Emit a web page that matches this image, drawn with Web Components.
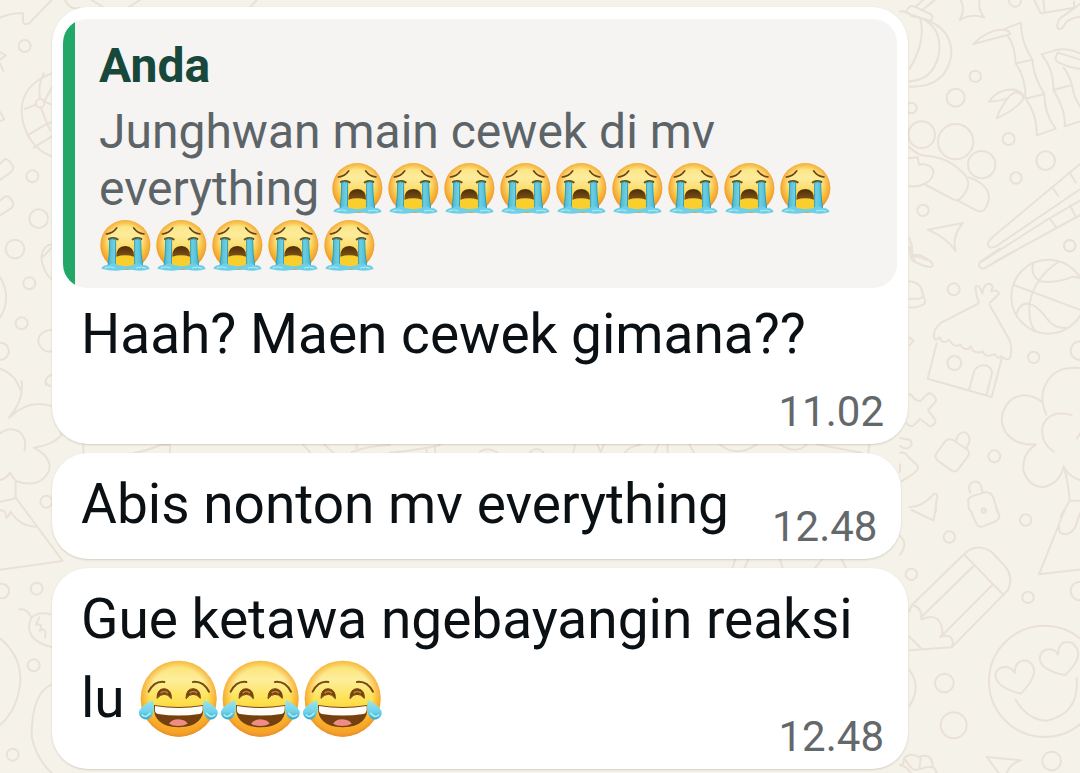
<!DOCTYPE html>
<html lang="id">
<head>
<meta charset="utf-8">
<meta name="viewport" content="width=device-width, initial-scale=1">
<title>Chat</title>
<style>
body { margin: 0; background: #f5f2ea; font-family: Roboto, "Noto Sans", sans-serif; }
</style>
</head>
<body>
<chat-page>
  <chat-bubble time="11.02" layout="below">
    <chat-quote slot="quote" author="Anda">Junghwan main cewek di mv everything <emoji-sob></emoji-sob><emoji-sob></emoji-sob><emoji-sob></emoji-sob><emoji-sob></emoji-sob><emoji-sob></emoji-sob><emoji-sob></emoji-sob><emoji-sob></emoji-sob><emoji-sob></emoji-sob><emoji-sob></emoji-sob><emoji-sob></emoji-sob><emoji-sob></emoji-sob><emoji-sob></emoji-sob><emoji-sob></emoji-sob><emoji-sob></emoji-sob></chat-quote>
    Haah? Maen cewek gimana??
  </chat-bubble>
  <chat-bubble time="12.48" layout="inline">Abis nonton mv everything</chat-bubble>
  <chat-bubble time="12.48" layout="overlap">Gue ketawa ngebayangin reaksi lu <emoji-joy></emoji-joy><emoji-joy></emoji-joy><emoji-joy></emoji-joy></chat-bubble>
</chat-page>

<template id="page-t">
<style>
:host { display: block; position: relative; min-height: 100vh; overflow: hidden; box-sizing: border-box; }
chat-wallpaper { position: absolute; inset: 0; }
main { position: relative; display: flex; flex-direction: column; align-items: flex-start; gap: 9px; padding: 7px 52px 4px; }
</style>
<chat-wallpaper></chat-wallpaper>
<main><slot></slot></main>
</template>

<template id="bubble-t">
<style>
:host { display: block; box-sizing: border-box; max-width: min(856px, 100%); background: #fff; border-radius: 36px; box-shadow: 0 1px 2px rgba(90, 80, 60, .22); color: #0b1014; }
::slotted([slot="quote"]) { margin: 0 11px; }
.body { display: grid; padding: 12px 24px 8px 29px; }
.text { margin: 0; font-size: 55px; line-height: 79px; }
time { font-size: 42px; line-height: 48px; color: #63686b; justify-self: end; align-self: end; }
:host([layout="below"]) { padding-top: 12px; }
:host([layout="below"]) .body { padding-top: 7px; row-gap: 14px; }
:host([layout="inline"]) .body { grid-template-columns: auto auto; column-gap: 43px; }
:host([layout="inline"]) .text { margin-bottom: 7px; }
:host([layout="overlap"]) .text { margin-bottom: 23px; }
:host([layout="overlap"]) :is(.text, time) { grid-area: 1 / 1; }
</style>
<slot name="quote"></slot>
<div class="body"><p class="text"><slot></slot></p><time></time></div>
</template>

<template id="quote-t">
<style>
:host { display: block; box-sizing: border-box; padding: 18px 24px 14px 36px; border-radius: 24px; background: linear-gradient(90deg, #21a866 12px, #f5f4f3 12px); font-size: 48px; line-height: 57px; color: #5d6468; }
strong { display: block; margin-bottom: 9px; font-weight: 700; color: #17483a; }
p { margin: 0; }
</style>
<strong></strong><p><slot></slot></p>
</template>

<template id="sob-t">
<style>
:host { display: inline-block; width: 56px; height: 53px; vertical-align: -10px; }
svg { display: block; width: 100%; height: 100%; }
</style>
<svg viewBox="33 37 168 159" role="img" aria-label="Wajah menangis keras">
<defs>
<linearGradient id="f" x2="0" y2="1"><stop offset="0" stop-color="#fbe277"/><stop offset=".3" stop-color="#fdec9c"/><stop offset=".65" stop-color="#fbd550"/><stop offset="1" stop-color="#f6b32d"/></linearGradient>
<radialGradient id="r" cx=".5" cy=".47" r=".54"><stop offset=".62" stop-color="#f4a62c" stop-opacity="0"/><stop offset=".84" stop-color="#f4a62c" stop-opacity=".75"/><stop offset="1" stop-color="#e78c38"/></radialGradient>
<linearGradient id="w" x2="1"><stop offset="0" stop-color="#44b9d2"/><stop offset=".45" stop-color="#b5edf5"/><stop offset="1" stop-color="#45bdd8"/></linearGradient>
<linearGradient id="m" x2="0" y2="1"><stop offset="0" stop-color="#4c2d08"/><stop offset="1" stop-color="#805316"/></linearGradient>
</defs>
<circle cx="112" cy="115" r="75" fill="url(#f)"/><circle cx="112" cy="115" r="75" fill="url(#r)"/>
<path d="M84 152Q112 140 139 152L139 175Q112 190 84 175Z" fill="#f8cf2c"/>
<path d="M55 82Q74 80 86 64M168 82Q149 80 137 64" fill="none" stroke="#6a4412" stroke-width="5" stroke-linecap="round"/>
<path d="M63 97Q75 91 89 98M134 98Q148 91 160 97" fill="none" stroke="#69501a" stroke-width="6" stroke-linecap="round"/>
<path d="M85 150Q84 119 112 118Q139 119 138 150Q112 142 85 150Z" fill="url(#m)"/>
<path d="M65 99Q73 94 83 99L82 178H60Q65 142 65 99ZM140 99Q150 94 158 99Q158 142 164 178H140Z" fill="url(#w)" stroke="#329db3" stroke-width="3"/>
<path d="M40 186Q44 174 62 175Q78 165 89 175Q112 182 136 175Q147 165 163 175Q181 174 185 187Q163 195 135 190Q118 186 105 190Q76 196 40 186Z" fill="#6fcfe6"/>
<path d="M50 184Q66 177 80 184M144 184Q160 178 174 185" stroke="#b4edf7" stroke-width="3" fill="none"/>
</svg>
</template>

<template id="joy-t">
<style>
:host { display: inline-block; width: 82px; height: 79px; vertical-align: -21px; }
svg { display: block; width: 100%; height: 100%; }
</style>
<svg viewBox="171 58 246 237" role="img" aria-label="Wajah tertawa dengan air mata">
<defs>
<linearGradient id="f" x2="0" y2="1"><stop offset="0" stop-color="#fbe06a"/><stop offset=".25" stop-color="#fdee9c"/><stop offset=".55" stop-color="#fde04a"/><stop offset=".8" stop-color="#fbb62a"/><stop offset="1" stop-color="#f39a25"/></linearGradient>
<radialGradient id="r" cx=".5" cy=".47" r=".54"><stop offset=".7" stop-color="#f6a429" stop-opacity="0"/><stop offset=".88" stop-color="#f6a429" stop-opacity=".7"/><stop offset="1" stop-color="#e6872f"/></radialGradient>
<linearGradient id="w" x2="0" y2="1"><stop offset="0" stop-color="#9be5ef"/><stop offset=".6" stop-color="#6ed3e9"/><stop offset="1" stop-color="#2fa9cf"/></linearGradient>
</defs>
<circle cx="293" cy="177" r="114" fill="url(#f)"/><circle cx="293" cy="177" r="114" fill="url(#r)"/>
<path d="M203 156Q220 123 250 127M384 156Q366 123 336 127" fill="none" stroke="#7a4a10" stroke-width="6" stroke-linecap="round"/>
<path d="M228 176Q228 147 250 147Q272 149 271 177Q260 163 250 164Q238 164 228 176ZM315 177Q315 147 337 147Q359 149 358 176Q347 163 336 164Q325 164 315 177Z" fill="#75420c" stroke="#75420c" stroke-width="3"/>
<path d="M239 160Q250 151 261 160M326 160Q337 151 348 160" fill="none" stroke="#b98443" stroke-width="5"/>
<path d="M219 196Q293 208 367 196Q373 261 293 263Q214 261 219 196Z" fill="#744010"/>
<path d="M222 199Q293 211 365 199Q367 223 355 223Q293 232 231 223Q219 222 222 199Z" fill="#fffdf8"/>
<path d="M264 252Q273 239 292 239Q313 240 320 252Q308 259 292 259Q275 259 264 252Z" fill="#ef8c83"/>
<path d="M216 181Q222 205 214 226Q206 241 190 239Q172 234 174 215Q180 198 216 181ZM369 181Q403 197 410 215Q412 234 395 239Q377 241 371 226Q363 205 369 181Z" fill="url(#w)"/>
<path d="M184 226Q194 237 207 221M377 221Q390 237 401 226" fill="none" stroke="#b6edf5" stroke-width="5" stroke-linecap="round"/>
</svg>
</template>

<template id="wallpaper-t">
<style>
:host { display: block; overflow: hidden; }
svg { display: block; width: 1080px; height: 773px; }
</style>
<svg viewBox="0 0 3240 2319" fill="none" stroke="#eae1d6" stroke-width="6" stroke-linecap="round" stroke-linejoin="round" aria-hidden="true">
<g transform="translate(2700 0)">
<path d="M0 34Q20 32 35 48M18 38Q25 12 44 20L91 42Q103 48 93 62Q66 57 18 38M47 20L75 -5M70 28L104 0M35 48Q158 70 154 164Q139 263 30 260M54 50Q130 80 116 165Q99 240 29 244M60 54Q80 120 29 206"/>
<path d="M180 -5Q198 29 179 60Q216 39 253 53Q231 25 240 -5M402 -2L420 36Q423 43 434 38L522 23V5M434 38L430 0M540 12L480 55Q466 79 475 86Q485 92 496 70Q510 53 545 50"/>
<circle cx="345" cy="2" r="18"/><circle cx="226" cy="229" r="17"/><circle cx="167" cy="293" r="27"/><circle cx="34" cy="324" r="16"/><circle cx="65" cy="404" r="40"/><circle cx="167" cy="425" r="53"/><circle cx="245" cy="494" r="41"/><circle cx="326" cy="417" r="18"/><circle cx="437" cy="482" r="28"/><circle cx="348" cy="534" r="17"/><circle cx="69" cy="631" r="17"/><circle cx="509" cy="737" r="17"/>
<path d="M220 132Q268 85 315 90Q331 94 330 103Q290 114 220 132M315 86L363 68Q362 124 397 179L347 191Q345 132 323 108M347 191Q377 230 377 296L433 282Q400 231 397 179M377 296Q412 345 410 406L467 386Q433 342 433 282M374 290Q350 256 300 276Q280 285 267 305Q299 303 322 296Q298 329 290 355Q352 326 370 296Q370 278 345 277Q331 283 322 296"/>
<path d="M425 163L465 151Q500 142 540 160M425 163Q463 210 460 270L516 255Q506 220 491 204M460 270Q498 330 494 379L545 363M516 255Q520 294 545 326M474 158Q458 181 477 188Q512 205 545 207M474 158L545 180"/>
<path d="M28 441Q53 466 75 467Q145 470 190 520Q221 548 186 591Q174 605 161 599L72 552Q50 563 28 558M28 474L53 472L57 494Q86 488 100 510Q104 537 72 552M207 532Q269 555 267 595Q257 645 230 632L174 602"/>
<path d="M83 689L188 669Q155 710 167 753Q139 712 83 689M540 492L279 710Q254 732 270 742Q282 747 310 724L540 568M457 563L475 588M508 517L527 547M545 599L440 660L245 785M545 643L285 785M450 657L469 683M510 616L526 647M28 715Q41 742 35 780M35 770Q52 756 83 778"/>
</g>
<g transform="translate(2700 750)">
<path d="M29 -10Q31 25 39 33Q48 39 41 16L89 32Q105 44 93 51Q80 53 39 33M350 0L251 56Q230 54 240 36L300 -5M28 94Q63 97 68 130Q74 140 57 146H28M68 137Q86 159 63 167Q45 175 28 172M28 263L41 272L28 286"/>
<circle cx="161" cy="118" r="18"/><circle cx="163" cy="339" r="21"/><circle cx="401" cy="322" r="17"/><circle cx="283" cy="619" r="18"/><circle cx="540" cy="302" r="28"/><circle cx="445" cy="140" r="111"/><circle cx="509" cy="-13" r="17"/>
<path d="M341 105L555 185M400 41Q389 73 420 94Q470 101 518 80L548 85M475 36Q403 83 389 160Q384 213 403 240M350 190Q363 153 393 163Q418 173 440 205Q464 237 500 234"/>
<path d="M236 160L125 217Q98 239 102 260Q103 277 119 262Q123 280 140 275Q149 263 154 280Q169 294 181 283Q188 301 207 296Q213 281 218 302Q236 312 248 304Q253 321 274 316L285 313Q295 331 303 318Q320 335 331 322Q341 280 317 250L269 165M236 157Q223 117 228 109Q240 104 247 131Q250 104 265 101Q285 103 273 123Q293 118 297 131Q290 141 269 158M110 280L83 386L275 441L305 326M207 419L222 365Q231 343 258 346Q280 356 275 373L260 433"/>
<path d="M28 432Q35 434 43 447L60 454L81 433Q89 425 104 440Q113 450 103 459L84 480L103 506Q112 516 98 526Q89 534 81 522L60 507L40 527Q25 530 20 520M135 574Q145 564 159 570L203 600Q212 610 201 622L176 656Q165 670 154 661L112 631Q102 621 110 609ZM167 574L173 558Q187 539 203 553Q217 568 198 596M0 564L28 569Q40 578 31 589Q27 596 13 595L0 588M0 608Q16 604 25 621L50 644Q61 655 43 669L5 694M0 666L0 643"/>
<path d="M439 494Q408 427 456 376Q489 346 545 355M427 457Q375 417 329 453Q286 503 321 552Q350 587 407 583M405 586Q367 609 370 661Q386 711 432 711Q480 700 491 649Q504 680 545 692M515 495Q447 477 428 529Q420 579 461 605M545 543L531 565M491 649Q504 690 509 752L481 800M509 752H550"/>
<path d="M28 772Q70 769 100 733Q113 726 112 743Q105 762 108 785M211 728Q202 709 214 699Q231 688 242 704L248 728M207 779L204 751Q207 740 225 736L254 727Q273 724 280 743L293 785"/><circle cx="251" cy="782" r="6"/>
</g>
<g transform="translate(2700 1530)">
<path d="M35 0L100 31L108 -5M211 0L230 43Q236 54 249 49L283 36Q299 29 298 15L289 -5M494 0L417 193L545 178M478 50Q472 73 500 73Q523 65 530 40L540 10M0 78Q26 102 0 134"/>
<circle cx="251" cy="1" r="6"/><circle cx="377" cy="30" r="17"/><circle cx="148" cy="81" r="17"/><circle cx="34" cy="193" r="17"/><circle cx="384" cy="262" r="17"/><circle cx="540" cy="243" r="28"/><circle cx="133" cy="519" r="28"/><circle cx="161" cy="646" r="39"/><circle cx="455" cy="753" r="28"/><circle cx="434" cy="514" r="167"/>
<path d="M192 133L35 286L28 304M192 133Q228 96 275 126L316 170Q342 202 323 241L155 412L28 421M192 133L312 256M220 169L64 321M278 224L122 381M38 286Q68 294 64 328Q124 303 128 371L120 381Q155 369 159 398L155 412M28 380L65 417M28 480Q66 530 28 588"/>
<path d="M362 551Q289 533 286 495Q292 466 325 472Q340 479 344 489Q346 446 382 452Q431 482 362 551ZM496 495Q421 482 419 444Q425 413 458 419Q472 425 474 434Q475 388 515 398Q562 432 496 495ZM347 569Q382 629 439 632Q538 613 530 504M260 741L363 751Q326 762 316 800M260 741L304 800"/>
<path d="M0 765Q12 767 12 745Q29 726 56 741Q96 726 98 770Q116 785 105 800M17 750Q38 789 58 777L62 745M62 777Q83 767 100 773M0 765Q20 769 33 789"/>
</g>
<g>
<path d="M0 53Q35 38 69 40V66Q73 77 87 70L155 0M195 0Q210 32 240 24M0 156L18 166L0 178M0 190L10 212M0 335L13 358L0 363M0 492L14 478Q23 473 40 500Q40 510 33 516L0 540M0 602L14 590Q27 583 40 610Q42 618 33 625L0 646M155 220Q46 262 69 366Q88 443 155 469M155 263L133 304L153 313M132 220Q113 252 120 294M74 327L107 314M122 322L150 391M83 406L136 374L153 367M101 443L155 409M0 830Q37 893 0 953M155 733Q127 736 124 775Q130 819 155 837M124 775L153 745M155 989Q112 995 115 1028Q129 1061 155 1054M155 1125Q132 1131 138 1156M0 1028Q25 1028 27 1054Q23 1078 0 1080M0 1106Q47 1123 61 1170"/>
<circle cx="74" cy="138" r="18"/><circle cx="120" cy="310" r="13" fill="none"/><circle cx="97" cy="529" r="18"/><circle cx="116" cy="656" r="28"/><circle cx="45" cy="747" r="28"/><circle cx="88" cy="850" r="18"/><circle cx="65" cy="970" r="18"/>
<path d="M275 0L310 22M420 0L385 22M770 0L750 22"/>
</g>
<g transform="translate(0 1149)">
<path d="M65 -5Q73 50 27 104Q85 48 155 69Q200 100 183 158Q157 187 101 194Q157 222 147 263Q120 319 47 294L30 269Q16 290 0 291M0 151Q26 131 55 144Q83 164 73 204M47 294V345M0 356Q27 351 48 345L188 534L0 560M0 382Q21 382 18 404Q26 402 32 386Q60 430 109 431M58 679Q83 676 94 704Q116 684 151 694M94 704Q66 769 154 792M118 703L108 725Q131 720 119 743Q141 731 135 764M0 766Q63 818 61 894Q53 982 0 1026M154 905Q95 930 95 1060Q108 1126 155 1170M138 0L150 10"/>
<circle cx="139" cy="356" r="18"/><circle cx="110" cy="617" r="18"/><circle cx="5" cy="624" r="22"/><circle cx="101" cy="847" r="18"/><circle cx="38" cy="1115" r="18"/>
</g>
<g transform="translate(150 1290)">
<path d="M100 43V68M255 68Q300 60 330 45H360V68M758 43L780 66M822 43L850 68M905 66Q950 48 1020 45M920 43V55M1020 68Q1110 60 1170 45M1130 55V68M1155 52V68"/>
<path d="M1290 64Q1315 50 1340 66M1440 66Q1460 48 1480 66M1570 68L1575 43M1642 43L1652 66L1662 43M1725 68Q1735 50 1770 45M1815 68L1825 43M1853 68V43M1918 43L1932 68M2008 43Q2060 85 2120 43M2190 43Q2240 75 2270 43M2300 43L2435 68M2455 68L2458 43"/>
</g>
<g transform="translate(2100 1674)"><path d="M98 30L105 5M133 30L145 5M240 5L248 30M345 30L365 5M425 5L438 30"/></g>
</svg>
</template>

<script>
const stamp = (host, id) => {
  const root = host.attachShadow({ mode: 'open' });
  root.append(document.getElementById(id).content.cloneNode(true));
  return root;
};
class ChatWallpaper extends HTMLElement {
  constructor() { super(); stamp(this, 'wallpaper-t'); }
}
class EmojiSob extends HTMLElement {
  constructor() { super(); stamp(this, 'sob-t'); }
}
class EmojiJoy extends HTMLElement {
  constructor() { super(); stamp(this, 'joy-t'); }
}
class ChatQuote extends HTMLElement {
  constructor() { super(); stamp(this, 'quote-t'); }
  connectedCallback() { this.shadowRoot.querySelector('strong').textContent = this.getAttribute('author'); }
}
class ChatBubble extends HTMLElement {
  constructor() { super(); stamp(this, 'bubble-t'); }
  connectedCallback() {
    const t = this.shadowRoot.querySelector('time');
    t.textContent = this.getAttribute('time');
    t.dateTime = this.getAttribute('time').replace('.', ':');
  }
}
class ChatPage extends HTMLElement {
  constructor() { super(); stamp(this, 'page-t'); }
}
customElements.define('chat-wallpaper', ChatWallpaper);
customElements.define('emoji-sob', EmojiSob);
customElements.define('emoji-joy', EmojiJoy);
customElements.define('chat-quote', ChatQuote);
customElements.define('chat-bubble', ChatBubble);
customElements.define('chat-page', ChatPage);
</script>
</body>
</html>
